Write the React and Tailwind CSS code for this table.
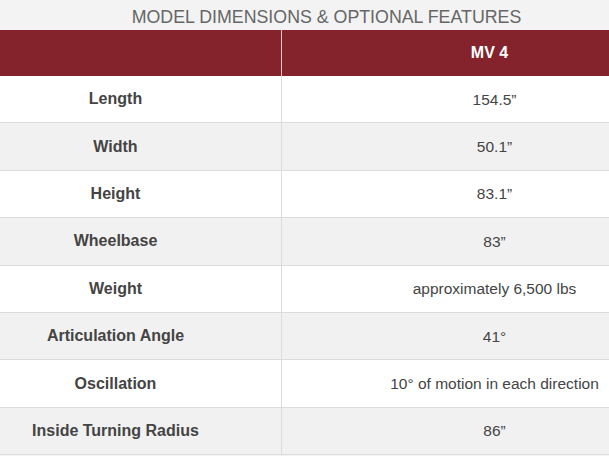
export default function App() {
  const rows = [
    { label: "Length", value: "154.5\u201d" },
    { label: "Width", value: "50.1\u201d" },
    { label: "Height", value: "83.1\u201d" },
    { label: "Wheelbase", value: "83\u201d" },
    { label: "Weight", value: "approximately 6,500 lbs" },
    { label: "Articulation Angle", value: "41\u00b0" },
    { label: "Oscillation", value: "10\u00b0 of motion in each direction" },
    { label: "Inside Turning Radius", value: "86\u201d" },
  ];

  return (
    <div className="w-[609px] h-[456px] overflow-hidden bg-[#f3f3f3] font-['Liberation_Sans',Arial,sans-serif]">
      {/* Title */}
      <div className="h-[30px] pl-[44px] flex items-center justify-center text-[17.8px] text-[#666] uppercase pt-[4px]">
        Model Dimensions &amp; Optional Features
      </div>

      {/* Header */}
      <div className="flex h-[46px] bg-[#85232d]">
        <div className="w-[282px] border-r border-[#d9c4c6]" />
        <div className="flex-1 pl-[88px] flex items-center justify-center text-white font-bold text-[16px]">
          MV 4
        </div>
      </div>

      {/* Rows */}
      {rows.map((row, i) => (
        <div
          key={row.label}
          className={`flex h-[47.4px] border-b border-[#dcdcdc] ${
            i % 2 === 0 ? "bg-white" : "bg-[#f1f1f1]"
          }`}
        >
          <div className="w-[282px] border-r border-[#dcdcdc] pr-[50px] flex items-center justify-center font-bold text-[16px] text-[#444]">
            {row.label}
          </div>
          <div className="flex-1 pl-[98px] flex items-center justify-center text-[15.5px] text-[#444]">
            {row.value}
          </div>
        </div>
      ))}
    </div>
  );
}
